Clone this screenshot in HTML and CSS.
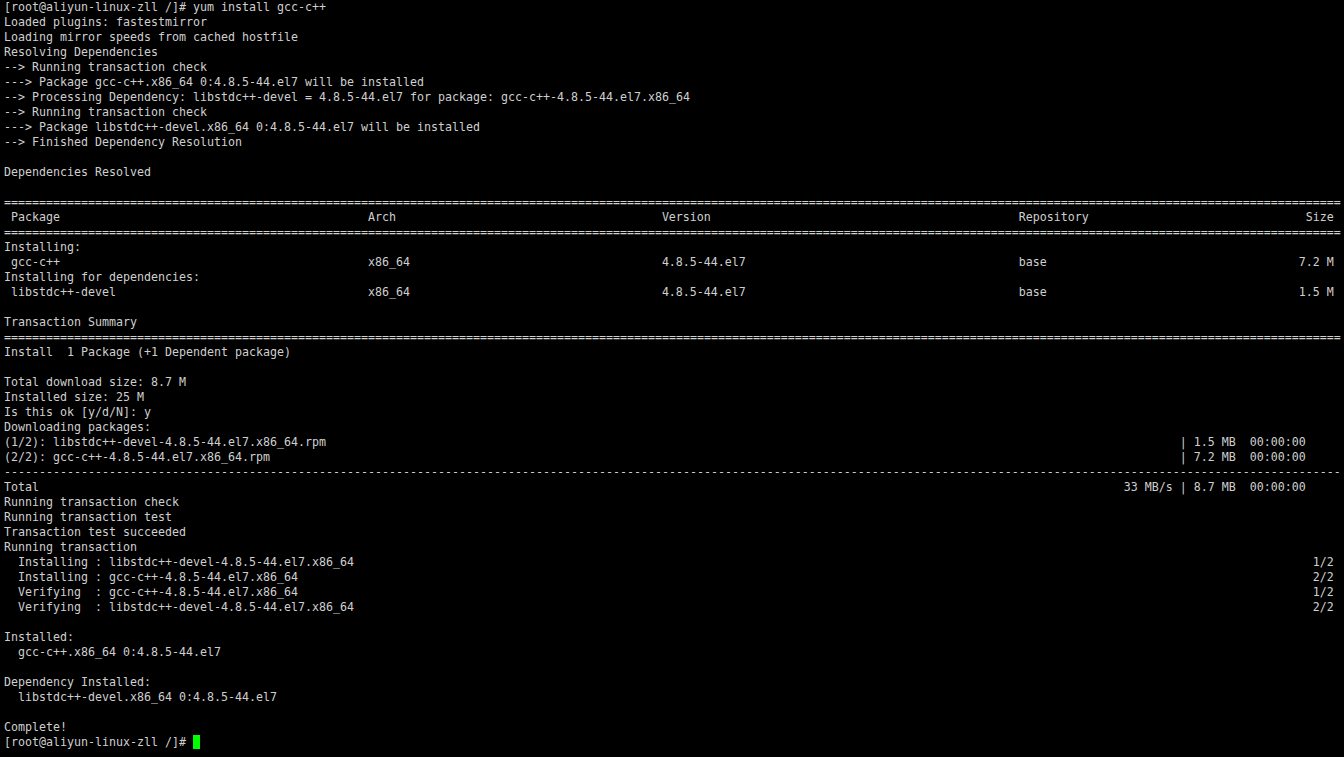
FILE: index.html
```html
<!DOCTYPE html>
<html lang="en">
<head>
<meta charset="utf-8">
<title>Terminal</title>
<link rel="stylesheet" href="styles.css">
</head>
<body>
<div class="term">
  <div class="line">[root@aliyun-linux-zll /]# yum install gcc-c++</div>
  <div class="line">Loaded plugins: fastestmirror</div>
  <div class="line">Loading mirror speeds from cached hostfile</div>
  <div class="line">Resolving Dependencies</div>
  <div class="line">--&gt; Running transaction check</div>
  <div class="line">---&gt; Package gcc-c++.x86_64 0:4.8.5-44.el7 will be installed</div>
  <div class="line">--&gt; Processing Dependency: libstdc++-devel = 4.8.5-44.el7 for package: gcc-c++-4.8.5-44.el7.x86_64</div>
  <div class="line">--&gt; Running transaction check</div>
  <div class="line">---&gt; Package libstdc++-devel.x86_64 0:4.8.5-44.el7 will be installed</div>
  <div class="line">--&gt; Finished Dependency Resolution</div>
  <div class="line"></div>
  <div class="line">Dependencies Resolved</div>
  <div class="line"></div>
  <div class="line rule">===============================================================================================================================================================================================</div>
  <div class="line tbl"><span> Package</span><span>Arch</span><span>Version</span><span>Repository</span><span>Size</span></div>
  <div class="line rule">===============================================================================================================================================================================================</div>
  <div class="line">Installing:</div>
  <div class="line tbl"><span> gcc-c++</span><span>x86_64</span><span>4.8.5-44.el7</span><span>base</span><span>7.2 M</span></div>
  <div class="line">Installing for dependencies:</div>
  <div class="line tbl"><span> libstdc++-devel</span><span>x86_64</span><span>4.8.5-44.el7</span><span>base</span><span>1.5 M</span></div>
  <div class="line"></div>
  <div class="line">Transaction Summary</div>
  <div class="line rule">===============================================================================================================================================================================================</div>
  <div class="line">Install  1 Package (+1 Dependent package)</div>
  <div class="line"></div>
  <div class="line">Total download size: 8.7 M</div>
  <div class="line">Installed size: 25 M</div>
  <div class="line">Is this ok [y/d/N]: y</div>
  <div class="line">Downloading packages:</div>
  <div class="line split dl"><span>(1/2): libstdc++-devel-4.8.5-44.el7.x86_64.rpm</span><span>| 1.5 MB  00:00:00</span></div>
  <div class="line split dl"><span>(2/2): gcc-c++-4.8.5-44.el7.x86_64.rpm</span><span>| 7.2 MB  00:00:00</span></div>
  <div class="line rule">-----------------------------------------------------------------------------------------------------------------------------------------------------------------------------------------------</div>
  <div class="line split dl"><span>Total</span><span>33 MB/s | 8.7 MB  00:00:00</span></div>
  <div class="line">Running transaction check</div>
  <div class="line">Running transaction test</div>
  <div class="line">Transaction test succeeded</div>
  <div class="line">Running transaction</div>
  <div class="line split full"><span>  Installing : libstdc++-devel-4.8.5-44.el7.x86_64</span><span>1/2</span></div>
  <div class="line split full"><span>  Installing : gcc-c++-4.8.5-44.el7.x86_64</span><span>2/2</span></div>
  <div class="line split full"><span>  Verifying  : gcc-c++-4.8.5-44.el7.x86_64</span><span>1/2</span></div>
  <div class="line split full"><span>  Verifying  : libstdc++-devel-4.8.5-44.el7.x86_64</span><span>2/2</span></div>
  <div class="line"></div>
  <div class="line">Installed:</div>
  <div class="line">  gcc-c++.x86_64 0:4.8.5-44.el7</div>
  <div class="line"></div>
  <div class="line">Dependency Installed:</div>
  <div class="line">  libstdc++-devel.x86_64 0:4.8.5-44.el7</div>
  <div class="line"></div>
  <div class="line">Complete!</div>
  <div class="line">[root@aliyun-linux-zll /]# <span class="cursor"></span></div>
</div>
</body>
</html>
```
FILE: styles.css
```css
html, body {
  margin: 0;
  padding: 0;
  background: #000;
  height: 100%;
  overflow: hidden;
}

.term {
  padding: 0 0 0 4px;
  font-family: "DejaVu Sans Mono", "Liberation Mono", monospace;
  font-size: 11.638px;
  line-height: 15px;
  color: #cfcfcf;
}

.line {
  height: 15px;
  white-space: pre;
}

.tbl {
  display: grid;
  grid-template-columns: 52ch 42ch 51ch 1fr auto;
  width: 190ch;
}

.split {
  display: flex;
  justify-content: space-between;
}

.dl {
  width: 186ch;
}

.full {
  width: 190ch;
}

.cursor {
  display: inline-block;
  width: 7px;
  height: 14px;
  background: #00ff00;
  vertical-align: top;
}
```
